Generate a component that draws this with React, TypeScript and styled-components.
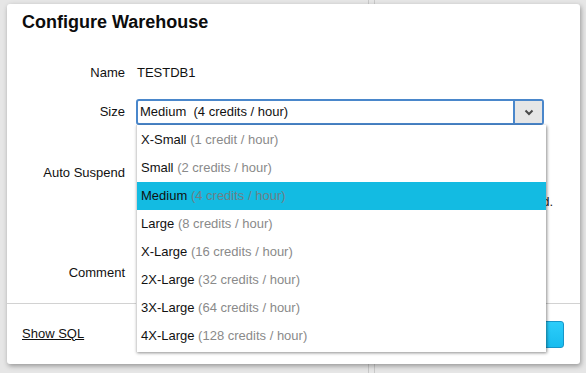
import React from "react";
import styled, { createGlobalStyle } from "styled-components";

const GlobalStyle = createGlobalStyle`
  html, body {
    margin: 0;
    padding: 0;
  }
  body {
    font-family: "Liberation Sans", Arial, Helvetica, sans-serif;
    font-size: 13px;
    color: #111;
  }
`;

interface SizeOption {
  name: string;
  credits: string;
}

const SIZES: SizeOption[] = [
  { name: "X-Small", credits: "1 credit / hour" },
  { name: "Small", credits: "2 credits / hour" },
  { name: "Medium", credits: "4 credits / hour" },
  { name: "Large", credits: "8 credits / hour" },
  { name: "X-Large", credits: "16 credits / hour" },
  { name: "2X-Large", credits: "32 credits / hour" },
  { name: "3X-Large", credits: "64 credits / hour" },
  { name: "4X-Large", credits: "128 credits / hour" },
];

const SELECTED = "Medium";

const Chevron = () => (
  <svg width="10" height="7" viewBox="0 0 10 7">
    <path d="M1.5 1.5 L5 5 L8.5 1.5" fill="none" stroke="#4a4a4a" strokeWidth="2" />
  </svg>
);

export default function App() {
  return (
    <>
      <GlobalStyle />
      <Page>
        <Modal>
          <Title>Configure Warehouse</Title>

          <Form>
            <Row $top={0}>
              <Label>Name</Label>
              <Value>TESTDB1</Value>
            </Row>

            <Row $top={13}>
              <Label>Size</Label>
              <SelectWrap>
                <Select>
                  <SelectText>Medium  (4 credits / hour)</SelectText>
                  <ArrowButton>
                    <Chevron />
                  </ArrowButton>
                </Select>

                <Options>
                  {SIZES.map((size) => (
                    <Option key={size.name} $active={size.name === SELECTED}>
                      {size.name} <Credits>({size.credits})</Credits>
                    </Option>
                  ))}
                </Options>
              </SelectWrap>
            </Row>

            <Row $top={35}>
              <Label>Auto Suspend</Label>
              <Input />
            </Row>

            <Row $top={9}>
              <span />
              <Hint>The warehouse is suspended after the selected idle period.</Hint>
            </Row>

            <Row $top={51}>
              <Label>Comment</Label>
              <Input />
            </Row>
          </Form>

          <Footer>
            <SqlLink>Show SQL</SqlLink>
            <PrimaryButton>Finish</PrimaryButton>
          </Footer>
        </Modal>
      </Page>
    </>
  );
}

const Page = styled.div`
  width: 586px;
  height: 373px;
  box-sizing: border-box;
  padding: 4px 6px 0 7px;
  overflow: hidden;
  background:
    linear-gradient(
      to right,
      transparent 368px,
      #c9c9c9 368px,
      #c9c9c9 369px,
      transparent 369px,
      transparent 374px,
      #c9c9c9 374px,
      #c9c9c9 375px,
      transparent 375px
    ),
    #e6e6e6;
`;

const Modal = styled.div`
  width: 573px;
  height: 360px;
  display: flex;
  flex-direction: column;
  background: #fff;
  border-radius: 3px;
  box-shadow: 1px 2px 5px rgba(0, 0, 0, 0.35);
`;

const Title = styled.h1`
  margin: 0;
  padding: 6px 15px 26px;
  font-size: 18px;
  line-height: 24px;
  font-weight: bold;
  color: #0c0c0c;
`;

const Form = styled.div`
  flex: 1;
  display: flex;
  flex-direction: column;
  padding-right: 36px;
`;

const Row = styled.div<{ $top: number }>`
  display: grid;
  grid-template-columns: 118px 1fr;
  column-gap: 12px;
  align-items: center;
  margin-top: ${({ $top }) => $top}px;
`;

const Label = styled.div`
  text-align: right;
  line-height: 26px;
  color: #111;
`;

const Value = styled.div`
  line-height: 26px;
  color: #111;
`;

const SelectWrap = styled.div`
  position: relative;
  margin-left: -1px;
`;

const Select = styled.div`
  display: flex;
  height: 26px;
  box-sizing: border-box;
  border: 2px solid #4a87cb;
  border-radius: 3px;
  background: #fff;
`;

const SelectText = styled.div`
  flex: 1;
  padding-left: 2px;
  line-height: 22px;
  white-space: pre;
  color: #111;
`;

const ArrowButton = styled.div`
  width: 27px;
  display: flex;
  align-items: center;
  justify-content: center;
  border-left: 2px solid #4a87cb;
  background: #e6e6e6;
`;

const Options = styled.ul`
  position: absolute;
  top: 100%;
  left: 0;
  width: 409px;
  margin: 0;
  padding: 1px 0 2px;
  list-style: none;
  background: #fff;
  border-left: 1px solid #d6d6d6;
  box-shadow: 1px 1px 3px rgba(0, 0, 0, 0.45);
  z-index: 2;
`;

const Option = styled.li<{ $active: boolean }>`
  height: 28px;
  line-height: 28px;
  padding-left: 4px;
  white-space: pre;
  color: #111;
  background: ${({ $active }) => ($active ? "#13bbe2" : "transparent")};

  & > span {
    color: ${({ $active }) => ($active ? "#6f7f86" : "#8a8a8a")};
  }
`;

const Credits = styled.span``;

const Input = styled.div`
  height: 26px;
  box-sizing: border-box;
  border: 1px solid #c4c4c4;
  border-radius: 3px;
`;

const Hint = styled.div`
  margin-right: -9px;
  line-height: 14px;
  font-size: 13px;
  text-align: right;
  white-space: nowrap;
  color: #222;
`;

const Footer = styled.div`
  height: 58px;
  display: flex;
  align-items: center;
  justify-content: space-between;
  padding: 0 16px 2px 15px;
  border-top: 1px solid #d2d2d2;
`;

const SqlLink = styled.a`
  color: #111;
  text-decoration: underline;
  cursor: pointer;
`;

const PrimaryButton = styled.button`
  width: 80px;
  height: 27px;
  margin-top: 2px;
  border: 1px solid #1796c9;
  border-radius: 3px;
  background: linear-gradient(#2ccdfa, #18bcef);
  color: #fff;
  font-family: inherit;
  font-size: 13px;
  font-weight: bold;
`;
